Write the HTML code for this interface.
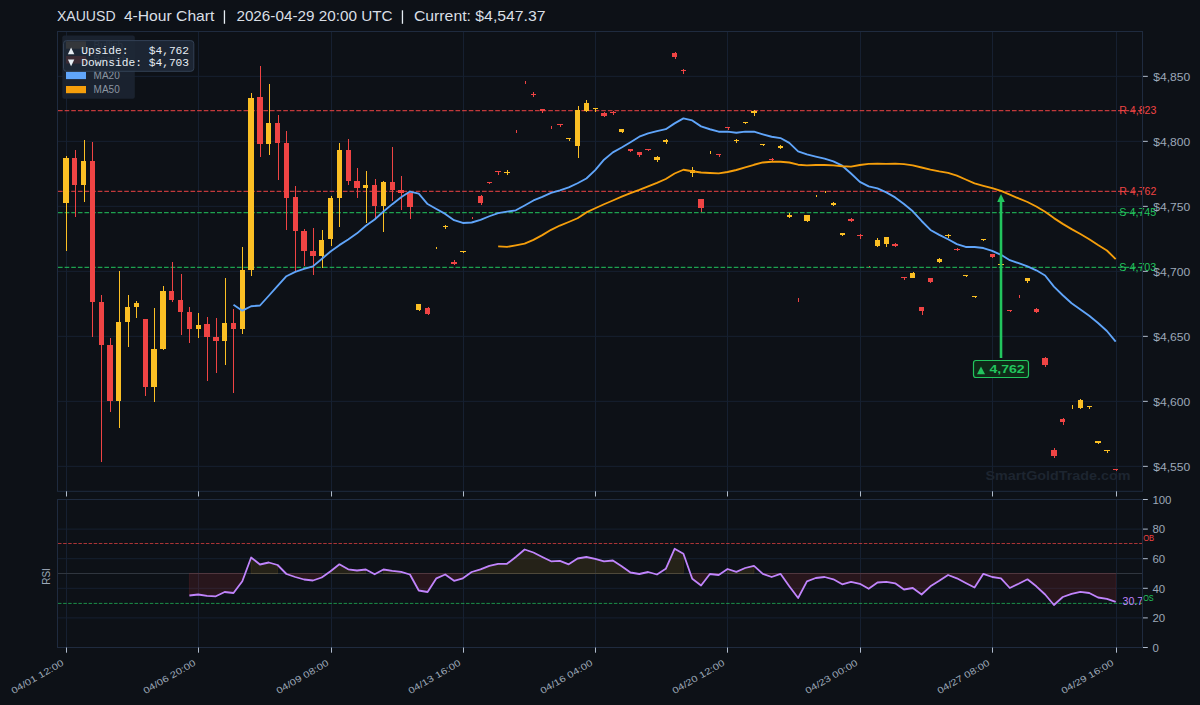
<!DOCTYPE html>
<html><head><meta charset="utf-8"><title>XAUUSD 4-Hour Chart</title>
<style>html,body{margin:0;padding:0;background:#0d1117;overflow:hidden;width:1200px;height:705px}svg{display:block}</style>
</head><body>
<svg width="1200" height="705" viewBox="0 0 1200 705" shape-rendering="geometricPrecision"><rect x="0" y="0" width="1200" height="705" fill="#0d1117"/>
<line x1="66.50" y1="31.5" x2="66.50" y2="491.3" stroke="#162031" stroke-width="1"/>
<line x1="198.50" y1="31.5" x2="198.50" y2="491.3" stroke="#162031" stroke-width="1"/>
<line x1="331.50" y1="31.5" x2="331.50" y2="491.3" stroke="#162031" stroke-width="1"/>
<line x1="463.50" y1="31.5" x2="463.50" y2="491.3" stroke="#162031" stroke-width="1"/>
<line x1="595.50" y1="31.5" x2="595.50" y2="491.3" stroke="#162031" stroke-width="1"/>
<line x1="727.50" y1="31.5" x2="727.50" y2="491.3" stroke="#162031" stroke-width="1"/>
<line x1="860.50" y1="31.5" x2="860.50" y2="491.3" stroke="#162031" stroke-width="1"/>
<line x1="992.50" y1="31.5" x2="992.50" y2="491.3" stroke="#162031" stroke-width="1"/>
<line x1="1116.50" y1="31.5" x2="1116.50" y2="491.3" stroke="#162031" stroke-width="1"/>
<line x1="57.5" y1="466.35" x2="1142.5" y2="466.35" stroke="#162031" stroke-width="1"/>
<line x1="57.5" y1="401.35" x2="1142.5" y2="401.35" stroke="#162031" stroke-width="1"/>
<line x1="57.5" y1="336.35" x2="1142.5" y2="336.35" stroke="#162031" stroke-width="1"/>
<line x1="57.5" y1="271.35" x2="1142.5" y2="271.35" stroke="#162031" stroke-width="1"/>
<line x1="57.5" y1="206.35" x2="1142.5" y2="206.35" stroke="#162031" stroke-width="1"/>
<line x1="57.5" y1="141.35" x2="1142.5" y2="141.35" stroke="#162031" stroke-width="1"/>
<line x1="57.5" y1="76.35" x2="1142.5" y2="76.35" stroke="#162031" stroke-width="1"/>
<line x1="58" y1="110.50" x2="1142.5" y2="110.50" stroke="#ef4444" stroke-width="1.25" stroke-dasharray="4.625 2.0" opacity="0.8"/>
<line x1="58" y1="191.40" x2="1142.5" y2="191.40" stroke="#ef4444" stroke-width="1.25" stroke-dasharray="4.625 2.0" opacity="0.8"/>
<line x1="58" y1="212.50" x2="1142.5" y2="212.50" stroke="#22c55e" stroke-width="1.25" stroke-dasharray="4.625 2.0" opacity="0.8"/>
<line x1="58" y1="267.40" x2="1142.5" y2="267.40" stroke="#22c55e" stroke-width="1.25" stroke-dasharray="4.625 2.0" opacity="0.8"/>
<text x="1058" y="480" text-anchor="middle" font-family="Liberation Sans, sans-serif" font-weight="bold" font-size="13.5" fill="#1d2530" textLength="145" lengthAdjust="spacingAndGlyphs">SmartGoldTrade.com</text>
<rect x="66.0" y="156" width="1" height="95" fill="#fbbf24"/>
<rect x="63" y="158" width="6" height="45" fill="#fbbf24"/>
<rect x="75.0" y="150" width="1" height="67" fill="#ef4444"/>
<rect x="72" y="158" width="5" height="27" fill="#ef4444"/>
<rect x="84.0" y="140" width="1" height="62" fill="#fbbf24"/>
<rect x="81" y="161" width="5" height="24" fill="#fbbf24"/>
<rect x="92.0" y="142" width="1" height="195" fill="#ef4444"/>
<rect x="90" y="161" width="5" height="141" fill="#ef4444"/>
<rect x="101.0" y="295" width="1" height="167" fill="#ef4444"/>
<rect x="99" y="302" width="5" height="43" fill="#ef4444"/>
<rect x="110.0" y="338" width="1" height="74" fill="#ef4444"/>
<rect x="107" y="345" width="6" height="56" fill="#ef4444"/>
<rect x="119.0" y="271" width="1" height="157" fill="#fbbf24"/>
<rect x="116" y="322" width="5" height="79" fill="#fbbf24"/>
<rect x="128.0" y="295" width="1" height="52" fill="#fbbf24"/>
<rect x="125" y="307" width="5" height="15" fill="#fbbf24"/>
<rect x="136.0" y="301" width="1" height="17" fill="#fbbf24"/>
<rect x="134" y="303" width="5" height="4" fill="#fbbf24"/>
<rect x="145.0" y="319" width="1" height="77" fill="#ef4444"/>
<rect x="143" y="319" width="5" height="68" fill="#ef4444"/>
<rect x="154.0" y="308" width="1" height="94" fill="#fbbf24"/>
<rect x="151" y="349" width="6" height="38" fill="#fbbf24"/>
<rect x="163.0" y="286" width="1" height="64" fill="#fbbf24"/>
<rect x="160" y="291" width="6" height="58" fill="#fbbf24"/>
<rect x="172.0" y="262" width="1" height="40" fill="#ef4444"/>
<rect x="169" y="291" width="5" height="9" fill="#ef4444"/>
<rect x="181.0" y="274" width="1" height="61" fill="#ef4444"/>
<rect x="178" y="300" width="5" height="12" fill="#ef4444"/>
<rect x="189.0" y="307" width="1" height="36" fill="#ef4444"/>
<rect x="187" y="312" width="5" height="17" fill="#ef4444"/>
<rect x="198.0" y="313" width="1" height="25" fill="#fbbf24"/>
<rect x="196" y="325" width="5" height="4" fill="#fbbf24"/>
<rect x="207.0" y="317" width="1" height="64" fill="#ef4444"/>
<rect x="204" y="324" width="6" height="13" fill="#ef4444"/>
<rect x="216.0" y="318" width="1" height="55" fill="#ef4444"/>
<rect x="213" y="337" width="6" height="4" fill="#ef4444"/>
<rect x="225.0" y="278" width="1" height="87" fill="#fbbf24"/>
<rect x="222" y="323" width="5" height="18" fill="#fbbf24"/>
<rect x="233.0" y="309" width="1" height="84" fill="#ef4444"/>
<rect x="231" y="323" width="5" height="6" fill="#ef4444"/>
<rect x="242.0" y="247" width="1" height="87" fill="#fbbf24"/>
<rect x="240" y="270" width="5" height="59" fill="#fbbf24"/>
<rect x="251.0" y="93" width="1" height="183" fill="#fbbf24"/>
<rect x="248" y="98" width="6" height="172" fill="#fbbf24"/>
<rect x="260.0" y="66" width="1" height="91" fill="#ef4444"/>
<rect x="257" y="97" width="6" height="47" fill="#ef4444"/>
<rect x="269.0" y="84" width="1" height="71" fill="#fbbf24"/>
<rect x="266" y="123" width="5" height="21" fill="#fbbf24"/>
<rect x="278.0" y="115" width="1" height="65" fill="#ef4444"/>
<rect x="275" y="123" width="5" height="20" fill="#ef4444"/>
<rect x="286.0" y="131" width="1" height="99" fill="#ef4444"/>
<rect x="284" y="143" width="5" height="55" fill="#ef4444"/>
<rect x="295.0" y="186" width="1" height="85" fill="#ef4444"/>
<rect x="293" y="197" width="5" height="34" fill="#ef4444"/>
<rect x="304.0" y="229" width="1" height="37" fill="#ef4444"/>
<rect x="301" y="231" width="6" height="20" fill="#ef4444"/>
<rect x="313.0" y="228" width="1" height="47" fill="#ef4444"/>
<rect x="310" y="251" width="6" height="5" fill="#ef4444"/>
<rect x="322.0" y="230" width="1" height="38" fill="#fbbf24"/>
<rect x="319" y="240" width="5" height="16" fill="#fbbf24"/>
<rect x="331.0" y="196" width="1" height="50" fill="#fbbf24"/>
<rect x="328" y="198" width="5" height="41" fill="#fbbf24"/>
<rect x="339.0" y="143" width="1" height="84" fill="#fbbf24"/>
<rect x="337" y="150" width="5" height="48" fill="#fbbf24"/>
<rect x="348.0" y="139" width="1" height="46" fill="#ef4444"/>
<rect x="346" y="150" width="5" height="31" fill="#ef4444"/>
<rect x="357.0" y="168" width="1" height="30" fill="#ef4444"/>
<rect x="354" y="181" width="6" height="7" fill="#ef4444"/>
<rect x="366.0" y="171" width="1" height="52" fill="#fbbf24"/>
<rect x="363" y="185" width="5" height="3" fill="#fbbf24"/>
<rect x="375.0" y="179" width="1" height="39" fill="#ef4444"/>
<rect x="372" y="185" width="5" height="21" fill="#ef4444"/>
<rect x="383.0" y="181" width="1" height="51" fill="#fbbf24"/>
<rect x="381" y="182" width="5" height="24" fill="#fbbf24"/>
<rect x="392.0" y="147" width="1" height="54" fill="#ef4444"/>
<rect x="390" y="182" width="5" height="8" fill="#ef4444"/>
<rect x="401.0" y="176" width="1" height="34" fill="#ef4444"/>
<rect x="398" y="190" width="6" height="3" fill="#ef4444"/>
<rect x="410.0" y="193" width="1" height="26" fill="#ef4444"/>
<rect x="407" y="193" width="6" height="14" fill="#ef4444"/>
<rect x="419.0" y="304" width="1" height="7" fill="#fbbf24"/>
<rect x="416" y="304" width="5" height="6" fill="#fbbf24"/>
<rect x="428.0" y="307" width="1" height="8" fill="#ef4444"/>
<rect x="425" y="308" width="5" height="6" fill="#ef4444"/>
<rect x="436.0" y="247" width="1" height="2" fill="#fbbf24"/>
<rect x="445.0" y="225" width="1" height="4" fill="#fbbf24"/>
<rect x="443" y="226" width="5" height="1" fill="#fbbf24"/>
<rect x="454.0" y="260" width="1" height="5" fill="#ef4444"/>
<rect x="451" y="262" width="6" height="2" fill="#ef4444"/>
<rect x="463.0" y="251" width="1" height="2" fill="#fbbf24"/>
<rect x="460" y="251" width="6" height="1" fill="#fbbf24"/>
<rect x="472.0" y="217" width="1" height="2" fill="#ef4444"/>
<rect x="481.0" y="195" width="1" height="10" fill="#ef4444"/>
<rect x="478" y="196" width="5" height="7" fill="#ef4444"/>
<rect x="489.0" y="182" width="1" height="2" fill="#ef4444"/>
<rect x="487" y="182" width="5" height="1" fill="#ef4444"/>
<rect x="498.0" y="171" width="1" height="4" fill="#ef4444"/>
<rect x="495" y="171" width="6" height="1" fill="#ef4444"/>
<rect x="507.0" y="170" width="1" height="5" fill="#fbbf24"/>
<rect x="504" y="172" width="6" height="1" fill="#fbbf24"/>
<rect x="516.0" y="130" width="1" height="3" fill="#ef4444"/>
<rect x="525.0" y="81" width="1" height="3" fill="#ef4444"/>
<rect x="533.0" y="92" width="1" height="5" fill="#ef4444"/>
<rect x="531" y="94" width="5" height="1" fill="#ef4444"/>
<rect x="542.0" y="109" width="1" height="4" fill="#ef4444"/>
<rect x="540" y="109" width="5" height="2" fill="#ef4444"/>
<rect x="551.0" y="126" width="1" height="3" fill="#ef4444"/>
<rect x="560.0" y="124" width="1" height="3" fill="#ef4444"/>
<rect x="557" y="124" width="6" height="1" fill="#ef4444"/>
<rect x="569.0" y="138" width="1" height="3" fill="#fbbf24"/>
<rect x="566" y="138" width="5" height="1" fill="#fbbf24"/>
<rect x="578.0" y="106" width="1" height="52" fill="#fbbf24"/>
<rect x="575" y="110" width="5" height="36" fill="#fbbf24"/>
<rect x="586.0" y="100" width="1" height="12" fill="#fbbf24"/>
<rect x="584" y="103" width="5" height="8" fill="#fbbf24"/>
<rect x="595.0" y="108" width="1" height="4" fill="#fbbf24"/>
<rect x="593" y="108" width="5" height="1" fill="#fbbf24"/>
<rect x="604.0" y="112" width="1" height="5" fill="#ef4444"/>
<rect x="601" y="113" width="6" height="3" fill="#ef4444"/>
<rect x="613.0" y="111" width="1" height="4" fill="#ef4444"/>
<rect x="610" y="112" width="6" height="1" fill="#ef4444"/>
<rect x="622.0" y="129" width="1" height="4" fill="#fbbf24"/>
<rect x="619" y="129" width="5" height="3" fill="#fbbf24"/>
<rect x="630.0" y="149" width="1" height="3" fill="#ef4444"/>
<rect x="628" y="149" width="5" height="2" fill="#ef4444"/>
<rect x="639.0" y="152" width="1" height="5" fill="#ef4444"/>
<rect x="637" y="152" width="5" height="3" fill="#ef4444"/>
<rect x="648.0" y="149" width="1" height="2" fill="#ef4444"/>
<rect x="645" y="149" width="6" height="1" fill="#ef4444"/>
<rect x="657.0" y="156" width="1" height="6" fill="#fbbf24"/>
<rect x="654" y="157" width="6" height="3" fill="#fbbf24"/>
<rect x="666.0" y="139" width="1" height="5" fill="#fbbf24"/>
<rect x="663" y="140" width="5" height="2" fill="#fbbf24"/>
<rect x="675.0" y="52" width="1" height="7" fill="#ef4444"/>
<rect x="672" y="53" width="5" height="4" fill="#ef4444"/>
<rect x="683.0" y="69" width="1" height="5" fill="#ef4444"/>
<rect x="681" y="70" width="5" height="1" fill="#ef4444"/>
<rect x="692.0" y="167" width="1" height="10" fill="#fbbf24"/>
<rect x="690" y="170" width="5" height="3" fill="#fbbf24"/>
<rect x="701.0" y="199" width="1" height="13" fill="#ef4444"/>
<rect x="698" y="199" width="6" height="9" fill="#ef4444"/>
<rect x="710.0" y="151" width="1" height="3" fill="#fbbf24"/>
<rect x="719.0" y="154" width="1" height="3" fill="#ef4444"/>
<rect x="716" y="154" width="5" height="1" fill="#ef4444"/>
<rect x="728.0" y="127" width="1" height="3" fill="#ef4444"/>
<rect x="725" y="127" width="5" height="1" fill="#ef4444"/>
<rect x="736.0" y="139" width="1" height="4" fill="#fbbf24"/>
<rect x="734" y="140" width="5" height="1" fill="#fbbf24"/>
<rect x="745.0" y="122" width="1" height="2" fill="#fbbf24"/>
<rect x="743" y="122" width="5" height="1" fill="#fbbf24"/>
<rect x="754.0" y="110" width="1" height="6" fill="#fbbf24"/>
<rect x="751" y="111" width="6" height="2" fill="#fbbf24"/>
<rect x="763.0" y="144" width="1" height="2" fill="#fbbf24"/>
<rect x="760" y="144" width="5" height="1" fill="#fbbf24"/>
<rect x="772.0" y="158" width="1" height="3" fill="#ef4444"/>
<rect x="769" y="159" width="5" height="1" fill="#ef4444"/>
<rect x="780.0" y="145" width="1" height="4" fill="#fbbf24"/>
<rect x="778" y="146" width="5" height="2" fill="#fbbf24"/>
<rect x="789.0" y="213" width="1" height="5" fill="#fbbf24"/>
<rect x="787" y="215" width="5" height="2" fill="#fbbf24"/>
<rect x="798.0" y="298" width="1" height="4" fill="#ef4444"/>
<rect x="807.0" y="215" width="1" height="7" fill="#fbbf24"/>
<rect x="804" y="215" width="6" height="6" fill="#fbbf24"/>
<rect x="816.0" y="195" width="1" height="2" fill="#fbbf24"/>
<rect x="825.0" y="191" width="1" height="2" fill="#fbbf24"/>
<rect x="833.0" y="202" width="1" height="4" fill="#fbbf24"/>
<rect x="831" y="203" width="5" height="2" fill="#fbbf24"/>
<rect x="842.0" y="233" width="1" height="3" fill="#fbbf24"/>
<rect x="840" y="233" width="5" height="2" fill="#fbbf24"/>
<rect x="851.0" y="218" width="1" height="4" fill="#ef4444"/>
<rect x="848" y="219" width="6" height="2" fill="#ef4444"/>
<rect x="860.0" y="234" width="1" height="5" fill="#ef4444"/>
<rect x="857" y="235" width="6" height="1" fill="#ef4444"/>
<rect x="869.0" y="266" width="1" height="1" fill="#ef4444"/>
<rect x="877.0" y="238" width="1" height="9" fill="#fbbf24"/>
<rect x="875" y="240" width="5" height="6" fill="#fbbf24"/>
<rect x="886.0" y="237" width="1" height="10" fill="#fbbf24"/>
<rect x="884" y="237" width="5" height="7" fill="#fbbf24"/>
<rect x="895.0" y="243" width="1" height="4" fill="#ef4444"/>
<rect x="892" y="244" width="6" height="2" fill="#ef4444"/>
<rect x="904.0" y="277" width="1" height="3" fill="#ef4444"/>
<rect x="901" y="277" width="6" height="1" fill="#ef4444"/>
<rect x="913.0" y="272" width="1" height="6" fill="#fbbf24"/>
<rect x="910" y="273" width="5" height="5" fill="#fbbf24"/>
<rect x="922.0" y="307" width="1" height="8" fill="#ef4444"/>
<rect x="919" y="307" width="5" height="4" fill="#ef4444"/>
<rect x="930.0" y="278" width="1" height="5" fill="#ef4444"/>
<rect x="928" y="278" width="5" height="4" fill="#ef4444"/>
<rect x="939.0" y="258" width="1" height="5" fill="#fbbf24"/>
<rect x="937" y="259" width="5" height="3" fill="#fbbf24"/>
<rect x="948.0" y="234" width="1" height="4" fill="#fbbf24"/>
<rect x="945" y="235" width="6" height="1" fill="#fbbf24"/>
<rect x="957.0" y="248" width="1" height="3" fill="#ef4444"/>
<rect x="954" y="249" width="6" height="1" fill="#ef4444"/>
<rect x="966.0" y="275" width="1" height="2" fill="#fbbf24"/>
<rect x="963" y="275" width="5" height="1" fill="#fbbf24"/>
<rect x="975.0" y="296" width="1" height="2" fill="#fbbf24"/>
<rect x="972" y="296" width="5" height="1" fill="#fbbf24"/>
<rect x="983.0" y="239" width="1" height="2" fill="#fbbf24"/>
<rect x="981" y="239" width="5" height="1" fill="#fbbf24"/>
<rect x="992.0" y="254" width="1" height="4" fill="#ef4444"/>
<rect x="990" y="254" width="5" height="3" fill="#ef4444"/>
<rect x="1001.0" y="264" width="1" height="2" fill="#fbbf24"/>
<rect x="998" y="264" width="6" height="1" fill="#fbbf24"/>
<rect x="1010.0" y="310" width="1" height="2" fill="#ef4444"/>
<rect x="1007" y="310" width="5" height="1" fill="#ef4444"/>
<rect x="1019.0" y="295" width="1" height="3" fill="#ef4444"/>
<rect x="1027.0" y="278" width="1" height="5" fill="#fbbf24"/>
<rect x="1025" y="278" width="5" height="3" fill="#fbbf24"/>
<rect x="1036.0" y="308" width="1" height="5" fill="#ef4444"/>
<rect x="1034" y="309" width="5" height="3" fill="#ef4444"/>
<rect x="1045.0" y="357" width="1" height="10" fill="#ef4444"/>
<rect x="1042" y="358" width="6" height="7" fill="#ef4444"/>
<rect x="1054.0" y="448" width="1" height="10" fill="#ef4444"/>
<rect x="1051" y="450" width="6" height="6" fill="#ef4444"/>
<rect x="1063.0" y="418" width="1" height="7" fill="#ef4444"/>
<rect x="1060" y="419" width="5" height="3" fill="#ef4444"/>
<rect x="1072.0" y="405" width="1" height="4" fill="#fbbf24"/>
<rect x="1080.0" y="399" width="1" height="10" fill="#fbbf24"/>
<rect x="1078" y="400" width="5" height="8" fill="#fbbf24"/>
<rect x="1089.0" y="406" width="1" height="3" fill="#fbbf24"/>
<rect x="1087" y="406" width="5" height="1" fill="#fbbf24"/>
<rect x="1098.0" y="441" width="1" height="3" fill="#fbbf24"/>
<rect x="1095" y="441" width="6" height="2" fill="#fbbf24"/>
<rect x="1107.0" y="450" width="1" height="3" fill="#fbbf24"/>
<rect x="1104" y="450" width="6" height="1" fill="#fbbf24"/>
<rect x="1116.0" y="469" width="1" height="2" fill="#ef4444"/>
<rect x="1113" y="469" width="5" height="1" fill="#ef4444"/>
<polyline points="233.50,304.70 242.32,310.67 251.14,306.29 259.96,305.50 268.79,295.75 277.61,285.95 286.43,276.24 295.25,271.91 304.07,268.84 312.90,266.41 321.72,258.98 330.54,251.45 339.36,245.15 348.18,239.45 357.01,233.35 365.83,225.76 374.65,219.44 383.47,211.56 392.29,204.15 401.12,197.16 409.94,191.54 418.76,193.55 427.58,204.05 436.40,209.03 445.23,213.88 454.05,220.19 462.87,222.96 471.69,222.50 480.51,219.79 489.34,216.25 498.16,213.05 506.98,211.66 515.80,210.30 524.62,205.50 533.45,200.44 542.27,196.80 551.09,192.91 559.91,190.33 568.73,187.30 577.56,183.27 586.38,178.53 595.20,170.07 604.02,159.71 612.84,152.38 621.67,147.52 630.49,142.19 639.31,136.66 648.13,133.36 656.95,131.14 665.78,129.21 674.60,123.37 683.42,118.33 692.24,120.46 701.06,126.39 709.89,129.25 718.71,131.70 727.53,131.70 736.35,132.79 745.17,131.70 754.00,131.70 762.82,134.29 771.64,136.74 780.46,138.05 789.28,142.88 798.11,151.34 806.93,154.47 815.75,156.57 824.57,158.70 833.39,161.35 842.22,165.69 851.04,173.53 859.86,181.87 868.68,186.44 877.50,188.30 886.33,192.33 895.15,197.41 903.97,204.03 912.79,211.33 921.61,220.98 930.44,229.94 939.26,234.88 948.08,239.24 956.90,244.07 965.72,246.97 974.55,247.04 983.37,248.02 992.19,250.88 1001.01,254.83 1009.83,260.20 1018.66,263.12 1027.48,266.39 1036.30,270.32 1045.12,275.46 1053.94,286.67 1062.77,295.28 1071.59,303.20 1080.41,309.43 1089.23,315.83 1098.05,323.00 1106.88,331.01 1115.70,341.58" fill="none" stroke="#60a5fa" stroke-width="1.85" stroke-linejoin="round"/>
<polyline points="498.16,246.35 506.98,246.95 515.80,245.30 524.62,243.71 533.45,239.81 542.27,235.12 551.09,229.83 559.91,225.54 568.73,221.99 577.56,218.26 586.38,212.42 595.20,208.28 604.02,204.25 612.84,200.49 621.67,196.66 630.49,193.12 639.31,189.95 648.13,186.37 656.95,182.89 665.78,179.01 674.60,173.52 683.42,169.77 692.24,171.26 701.06,172.51 709.89,172.99 718.71,173.30 727.53,171.99 736.35,169.99 745.17,167.45 754.00,164.76 762.82,162.47 771.64,161.71 780.46,161.74 789.28,162.52 798.11,164.71 806.93,165.30 815.75,165.02 824.57,165.00 833.39,165.31 842.22,166.21 851.04,166.66 859.86,165.03 868.68,163.87 877.50,163.70 886.33,163.80 895.15,163.70 903.97,164.19 912.79,165.37 921.61,167.48 930.44,169.59 939.26,171.31 948.08,172.82 956.90,175.59 965.72,179.52 974.55,183.40 983.37,185.82 992.19,188.22 1001.01,190.89 1009.83,194.63 1018.66,198.44 1027.48,201.99 1036.30,206.50 1045.12,211.79 1053.94,218.12 1062.77,223.85 1071.59,229.13 1080.41,234.04 1089.23,239.22 1098.05,245.04 1106.88,250.47 1115.70,259.10" fill="none" stroke="#f59e0b" stroke-width="1.85" stroke-linejoin="round"/>
<line x1="1001.01" y1="358" x2="1001.01" y2="200" stroke="#22c55e" stroke-width="2.6"/>
<polygon points="997.21,202 1004.81,202 1001.01,194" fill="#22c55e"/>
<rect x="973.5" y="360.5" width="55" height="17" rx="2.5" fill="#0f2a18" stroke="#22c55e" stroke-width="1.2"/>
<polygon points="977,374.2 985,374.2 981,366.5" fill="#22c55e"/>
<text x="989.5" y="373.4" font-family="Liberation Sans, sans-serif" font-weight="bold" font-size="11.5" fill="#22c55e" textLength="35.2" lengthAdjust="spacingAndGlyphs">4,762</text>
<text x="1119.3" y="114.30" font-family="Liberation Sans, sans-serif" font-size="10.3" fill="#ef4444" textLength="37" lengthAdjust="spacingAndGlyphs">R 4,823</text>
<text x="1119.3" y="195.20" font-family="Liberation Sans, sans-serif" font-size="10.3" fill="#ef4444" textLength="37" lengthAdjust="spacingAndGlyphs">R 4,762</text>
<text x="1119.3" y="216.30" font-family="Liberation Sans, sans-serif" font-size="10.3" fill="#22c55e" textLength="37" lengthAdjust="spacingAndGlyphs">S 4,745</text>
<text x="1119.3" y="271.20" font-family="Liberation Sans, sans-serif" font-size="10.3" fill="#22c55e" textLength="37" lengthAdjust="spacingAndGlyphs">S 4,703</text>
<rect x="57.5" y="31.5" width="1085.0" height="459.8" fill="none" stroke="#1f2b3f" stroke-width="1"/>
<line x1="1143.0" y1="466.35" x2="1147.8" y2="466.35" stroke="#b0bccd" stroke-width="1"/>
<text x="1153.3" y="470.95" font-family="Liberation Sans, sans-serif" font-size="10.5" fill="#9ca8b8" textLength="37" lengthAdjust="spacingAndGlyphs">$4,550</text>
<line x1="1143.0" y1="401.35" x2="1147.8" y2="401.35" stroke="#b0bccd" stroke-width="1"/>
<text x="1153.3" y="405.95" font-family="Liberation Sans, sans-serif" font-size="10.5" fill="#9ca8b8" textLength="37" lengthAdjust="spacingAndGlyphs">$4,600</text>
<line x1="1143.0" y1="336.35" x2="1147.8" y2="336.35" stroke="#b0bccd" stroke-width="1"/>
<text x="1153.3" y="340.95" font-family="Liberation Sans, sans-serif" font-size="10.5" fill="#9ca8b8" textLength="37" lengthAdjust="spacingAndGlyphs">$4,650</text>
<line x1="1143.0" y1="271.35" x2="1147.8" y2="271.35" stroke="#b0bccd" stroke-width="1"/>
<text x="1153.3" y="275.95" font-family="Liberation Sans, sans-serif" font-size="10.5" fill="#9ca8b8" textLength="37" lengthAdjust="spacingAndGlyphs">$4,700</text>
<line x1="1143.0" y1="206.35" x2="1147.8" y2="206.35" stroke="#b0bccd" stroke-width="1"/>
<text x="1153.3" y="210.95" font-family="Liberation Sans, sans-serif" font-size="10.5" fill="#9ca8b8" textLength="37" lengthAdjust="spacingAndGlyphs">$4,750</text>
<line x1="1143.0" y1="141.35" x2="1147.8" y2="141.35" stroke="#b0bccd" stroke-width="1"/>
<text x="1153.3" y="145.95" font-family="Liberation Sans, sans-serif" font-size="10.5" fill="#9ca8b8" textLength="37" lengthAdjust="spacingAndGlyphs">$4,800</text>
<line x1="1143.0" y1="76.35" x2="1147.8" y2="76.35" stroke="#b0bccd" stroke-width="1"/>
<text x="1153.3" y="80.95" font-family="Liberation Sans, sans-serif" font-size="10.5" fill="#9ca8b8" textLength="37" lengthAdjust="spacingAndGlyphs">$4,850</text>
<line x1="66.50" y1="491.3" x2="66.50" y2="496.5" stroke="#b0bccd" stroke-width="1"/>
<line x1="198.50" y1="491.3" x2="198.50" y2="496.5" stroke="#b0bccd" stroke-width="1"/>
<line x1="331.50" y1="491.3" x2="331.50" y2="496.5" stroke="#b0bccd" stroke-width="1"/>
<line x1="463.50" y1="491.3" x2="463.50" y2="496.5" stroke="#b0bccd" stroke-width="1"/>
<line x1="595.50" y1="491.3" x2="595.50" y2="496.5" stroke="#b0bccd" stroke-width="1"/>
<line x1="727.50" y1="491.3" x2="727.50" y2="496.5" stroke="#b0bccd" stroke-width="1"/>
<line x1="860.50" y1="491.3" x2="860.50" y2="496.5" stroke="#b0bccd" stroke-width="1"/>
<line x1="992.50" y1="491.3" x2="992.50" y2="496.5" stroke="#b0bccd" stroke-width="1"/>
<line x1="1116.50" y1="491.3" x2="1116.50" y2="496.5" stroke="#b0bccd" stroke-width="1"/>
<rect x="62.3" y="35.6" width="72.5" height="63.2" rx="2" fill="#1b2430" opacity="0.95"/>
<rect x="66" y="41.5" width="20" height="7.2" fill="#3a3d40"/>
<text x="93.6" y="48.60" font-family="Liberation Sans, sans-serif" font-size="10" fill="#8b95a1">Bullish</text>
<rect x="66" y="56" width="20" height="7.2" fill="#3f2a2e"/>
<text x="93.6" y="63.10" font-family="Liberation Sans, sans-serif" font-size="10" fill="#8b95a1">Bearish</text>
<rect x="66" y="71.9" width="20" height="7.2" fill="#60a5fa"/>
<text x="93.6" y="79.00" font-family="Liberation Sans, sans-serif" font-size="10" fill="#8b95a1">MA20</text>
<rect x="66" y="86" width="20" height="7.2" fill="#f59e0b"/>
<text x="93.6" y="93.10" font-family="Liberation Sans, sans-serif" font-size="10" fill="#8b95a1">MA50</text>
<rect x="63.5" y="40.6" width="130.3" height="30.7" rx="3" fill="#1e2836" fill-opacity="0.9" stroke="#334155" stroke-width="1"/>
<rect x="66" y="41.3" width="20" height="7.4" fill="#34373b"/>
<rect x="66" y="56" width="20" height="7.6" fill="#3a2b34"/>
<polygon points="67.9,54.3 74.3,54.3 71.1,47.6" fill="#e6edf3"/>
<polygon points="67.9,59.6 74.3,59.6 71.1,66.2" fill="#e6edf3"/>
<text x="81.3" y="54.2" font-family="Liberation Mono, monospace" font-size="11" fill="#e6edf3" textLength="107.8" lengthAdjust="spacingAndGlyphs" xml:space="preserve" style="white-space:pre">Upside:   $4,762</text>
<text x="81.3" y="66.4" font-family="Liberation Mono, monospace" font-size="11" fill="#e6edf3" textLength="107.8" lengthAdjust="spacingAndGlyphs" xml:space="preserve" style="white-space:pre">Downside: $4,703</text>
<line x1="66.50" y1="499.5" x2="66.50" y2="647.5" stroke="#162031" stroke-width="1"/>
<line x1="198.50" y1="499.5" x2="198.50" y2="647.5" stroke="#162031" stroke-width="1"/>
<line x1="331.50" y1="499.5" x2="331.50" y2="647.5" stroke="#162031" stroke-width="1"/>
<line x1="463.50" y1="499.5" x2="463.50" y2="647.5" stroke="#162031" stroke-width="1"/>
<line x1="595.50" y1="499.5" x2="595.50" y2="647.5" stroke="#162031" stroke-width="1"/>
<line x1="727.50" y1="499.5" x2="727.50" y2="647.5" stroke="#162031" stroke-width="1"/>
<line x1="860.50" y1="499.5" x2="860.50" y2="647.5" stroke="#162031" stroke-width="1"/>
<line x1="992.50" y1="499.5" x2="992.50" y2="647.5" stroke="#162031" stroke-width="1"/>
<line x1="1116.50" y1="499.5" x2="1116.50" y2="647.5" stroke="#162031" stroke-width="1"/>
<line x1="57.5" y1="617.90" x2="1142.5" y2="617.90" stroke="#162031" stroke-width="1"/>
<line x1="57.5" y1="588.30" x2="1142.5" y2="588.30" stroke="#162031" stroke-width="1"/>
<line x1="57.5" y1="558.70" x2="1142.5" y2="558.70" stroke="#162031" stroke-width="1"/>
<line x1="57.5" y1="529.10" x2="1142.5" y2="529.10" stroke="#162031" stroke-width="1"/>
<line x1="57.5" y1="573.50" x2="1142.5" y2="573.50" stroke="#30363f" stroke-width="1"/>
<polygon points="251.14,557.50 259.96,564.50 268.79,562.50 277.61,565.00 277.61,573.50 251.14,573.50" fill="#fbbf24" fill-opacity="0.1" stroke="#fbbf24" stroke-opacity="0.1" stroke-width="1"/>
<polygon points="330.54,571.30 339.36,564.30 348.18,569.30 357.01,570.50 365.83,569.50 365.83,573.50 330.54,573.50" fill="#fbbf24" fill-opacity="0.1" stroke="#fbbf24" stroke-opacity="0.1" stroke-width="1"/>
<polygon points="383.47,569.50 392.29,570.80 401.12,571.80 401.12,573.50 383.47,573.50" fill="#fbbf24" fill-opacity="0.1" stroke="#fbbf24" stroke-opacity="0.1" stroke-width="1"/>
<polygon points="471.69,572.00 480.51,569.30 489.34,565.80 498.16,563.80 506.98,563.80 515.80,557.00 524.62,549.50 533.45,552.50 542.27,557.00 551.09,561.30 559.91,560.80 568.73,564.30 577.56,558.50 586.38,557.00 595.20,558.80 604.02,561.30 612.84,560.50 621.67,566.30 630.49,572.50 630.49,573.50 471.69,573.50" fill="#fbbf24" fill-opacity="0.1" stroke="#fbbf24" stroke-opacity="0.1" stroke-width="1"/>
<polygon points="665.78,568.80 674.60,548.80 683.42,553.80 683.42,573.50 665.78,573.50" fill="#fbbf24" fill-opacity="0.1" stroke="#fbbf24" stroke-opacity="0.1" stroke-width="1"/>
<polygon points="727.53,569.00 736.35,571.80 745.17,568.00 754.00,565.80 754.00,573.50 727.53,573.50" fill="#fbbf24" fill-opacity="0.1" stroke="#fbbf24" stroke-opacity="0.1" stroke-width="1"/>
<polygon points="189.39,595.50 198.21,594.50 207.03,595.80 215.85,596.30 224.68,592.00 233.50,593.00 242.32,581.30 242.32,573.50 189.39,573.50" fill="#ef4444" fill-opacity="0.12" stroke="#ef4444" stroke-opacity="0.12" stroke-width="1"/>
<polygon points="286.43,574.00 295.25,577.00 304.07,579.50 312.90,580.50 321.72,577.50 321.72,573.50 286.43,573.50" fill="#ef4444" fill-opacity="0.12" stroke="#ef4444" stroke-opacity="0.12" stroke-width="1"/>
<polygon points="409.94,574.50 418.76,590.50 427.58,592.00 436.40,578.30 445.23,574.50 454.05,580.80 462.87,578.30 462.87,573.50 409.94,573.50" fill="#ef4444" fill-opacity="0.12" stroke="#ef4444" stroke-opacity="0.12" stroke-width="1"/>
<polygon points="692.24,578.80 701.06,585.50 709.89,574.00 718.71,575.00 718.71,573.50 692.24,573.50" fill="#ef4444" fill-opacity="0.12" stroke="#ef4444" stroke-opacity="0.12" stroke-width="1"/>
<polygon points="762.82,573.80 771.64,577.00 780.46,573.80 789.28,586.30 798.11,598.00 806.93,581.30 815.75,578.00 824.57,577.00 833.39,579.30 842.22,584.30 851.04,581.80 859.86,583.80 868.68,588.80 877.50,582.50 886.33,581.80 895.15,583.30 903.97,589.50 912.79,588.00 921.61,594.50 930.44,586.30 939.26,580.80 948.08,575.00 956.90,578.30 965.72,583.00 974.55,587.50 983.37,573.80 992.19,577.00 1001.01,578.30 1009.83,588.00 1018.66,583.80 1027.48,579.30 1036.30,586.30 1045.12,594.50 1053.94,605.00 1062.77,597.00 1071.59,593.80 1080.41,591.80 1089.23,593.00 1098.05,597.50 1106.88,598.80 1115.70,601.80 1115.70,573.50 762.82,573.50" fill="#ef4444" fill-opacity="0.12" stroke="#ef4444" stroke-opacity="0.12" stroke-width="1"/>
<line x1="58" y1="543.5" x2="1142.5" y2="543.5" stroke="#ef4444" stroke-width="1" stroke-dasharray="3.5 1.6" opacity="0.7"/>
<line x1="58" y1="603.4" x2="1142.5" y2="603.4" stroke="#22c55e" stroke-width="1" stroke-dasharray="3.5 1.6" opacity="0.7"/>
<polyline points="189.39,595.50 198.21,594.50 207.03,595.80 215.85,596.30 224.68,592.00 233.50,593.00 242.32,581.30 251.14,557.50 259.96,564.50 268.79,562.50 277.61,565.00 286.43,574.00 295.25,577.00 304.07,579.50 312.90,580.50 321.72,577.50 330.54,571.30 339.36,564.30 348.18,569.30 357.01,570.50 365.83,569.50 374.65,574.30 383.47,569.50 392.29,570.80 401.12,571.80 409.94,574.50 418.76,590.50 427.58,592.00 436.40,578.30 445.23,574.50 454.05,580.80 462.87,578.30 471.69,572.00 480.51,569.30 489.34,565.80 498.16,563.80 506.98,563.80 515.80,557.00 524.62,549.50 533.45,552.50 542.27,557.00 551.09,561.30 559.91,560.80 568.73,564.30 577.56,558.50 586.38,557.00 595.20,558.80 604.02,561.30 612.84,560.50 621.67,566.30 630.49,572.50 639.31,574.00 648.13,572.00 656.95,574.50 665.78,568.80 674.60,548.80 683.42,553.80 692.24,578.80 701.06,585.50 709.89,574.00 718.71,575.00 727.53,569.00 736.35,571.80 745.17,568.00 754.00,565.80 762.82,573.80 771.64,577.00 780.46,573.80 789.28,586.30 798.11,598.00 806.93,581.30 815.75,578.00 824.57,577.00 833.39,579.30 842.22,584.30 851.04,581.80 859.86,583.80 868.68,588.80 877.50,582.50 886.33,581.80 895.15,583.30 903.97,589.50 912.79,588.00 921.61,594.50 930.44,586.30 939.26,580.80 948.08,575.00 956.90,578.30 965.72,583.00 974.55,587.50 983.37,573.80 992.19,577.00 1001.01,578.30 1009.83,588.00 1018.66,583.80 1027.48,579.30 1036.30,586.30 1045.12,594.50 1053.94,605.00 1062.77,597.00 1071.59,593.80 1080.41,591.80 1089.23,593.00 1098.05,597.50 1106.88,598.80 1115.70,601.80" fill="none" stroke="#c084fc" stroke-width="1.8" stroke-linejoin="round"/>
<text x="1122.6" y="605" font-family="Liberation Sans, sans-serif" font-size="10.3" fill="#c084fc" textLength="20.6" lengthAdjust="spacingAndGlyphs">30.7</text>
<text x="1143.2" y="541" font-family="Liberation Sans, sans-serif" font-size="8.8" fill="#ef4444" textLength="11" lengthAdjust="spacingAndGlyphs">OB</text>
<text x="1143.2" y="601" font-family="Liberation Sans, sans-serif" font-size="8.8" fill="#22c55e" textLength="10.5" lengthAdjust="spacingAndGlyphs">OS</text>
<rect x="57.5" y="499.5" width="1085.0" height="148.0" fill="none" stroke="#1f2b3f" stroke-width="1"/>
<line x1="1143.0" y1="647.50" x2="1147.8" y2="647.50" stroke="#b0bccd" stroke-width="1"/>
<text x="1152.4" y="651.80" font-family="Liberation Sans, sans-serif" font-size="10" fill="#9ca8b8" textLength="6.36" lengthAdjust="spacingAndGlyphs">0</text>
<line x1="1143.0" y1="617.90" x2="1147.8" y2="617.90" stroke="#b0bccd" stroke-width="1"/>
<text x="1152.4" y="622.20" font-family="Liberation Sans, sans-serif" font-size="10" fill="#9ca8b8" textLength="12.72" lengthAdjust="spacingAndGlyphs">20</text>
<line x1="1143.0" y1="588.30" x2="1147.8" y2="588.30" stroke="#b0bccd" stroke-width="1"/>
<text x="1152.4" y="592.60" font-family="Liberation Sans, sans-serif" font-size="10" fill="#9ca8b8" textLength="12.72" lengthAdjust="spacingAndGlyphs">40</text>
<line x1="1143.0" y1="558.70" x2="1147.8" y2="558.70" stroke="#b0bccd" stroke-width="1"/>
<text x="1152.4" y="563.00" font-family="Liberation Sans, sans-serif" font-size="10" fill="#9ca8b8" textLength="12.72" lengthAdjust="spacingAndGlyphs">60</text>
<line x1="1143.0" y1="529.10" x2="1147.8" y2="529.10" stroke="#b0bccd" stroke-width="1"/>
<text x="1152.4" y="533.40" font-family="Liberation Sans, sans-serif" font-size="10" fill="#9ca8b8" textLength="12.72" lengthAdjust="spacingAndGlyphs">80</text>
<line x1="1143.0" y1="499.50" x2="1147.8" y2="499.50" stroke="#b0bccd" stroke-width="1"/>
<text x="1152.4" y="503.80" font-family="Liberation Sans, sans-serif" font-size="10" fill="#9ca8b8" textLength="19.08" lengthAdjust="spacingAndGlyphs">100</text>
<line x1="66.50" y1="647.5" x2="66.50" y2="652.7" stroke="#b0bccd" stroke-width="1"/>
<line x1="198.50" y1="647.5" x2="198.50" y2="652.7" stroke="#b0bccd" stroke-width="1"/>
<line x1="331.50" y1="647.5" x2="331.50" y2="652.7" stroke="#b0bccd" stroke-width="1"/>
<line x1="463.50" y1="647.5" x2="463.50" y2="652.7" stroke="#b0bccd" stroke-width="1"/>
<line x1="595.50" y1="647.5" x2="595.50" y2="652.7" stroke="#b0bccd" stroke-width="1"/>
<line x1="727.50" y1="647.5" x2="727.50" y2="652.7" stroke="#b0bccd" stroke-width="1"/>
<line x1="860.50" y1="647.5" x2="860.50" y2="652.7" stroke="#b0bccd" stroke-width="1"/>
<line x1="992.50" y1="647.5" x2="992.50" y2="652.7" stroke="#b0bccd" stroke-width="1"/>
<line x1="1116.50" y1="647.5" x2="1116.50" y2="652.7" stroke="#b0bccd" stroke-width="1"/>
<text transform="translate(61.50,659.5) rotate(-30)" text-anchor="end" font-family="Liberation Sans, sans-serif" font-size="9" fill="#9ca8b8" textLength="59" lengthAdjust="spacingAndGlyphs" dy="6">04/01 12:00</text>
<text transform="translate(193.50,659.5) rotate(-30)" text-anchor="end" font-family="Liberation Sans, sans-serif" font-size="9" fill="#9ca8b8" textLength="59" lengthAdjust="spacingAndGlyphs" dy="6">04/06 20:00</text>
<text transform="translate(326.50,659.5) rotate(-30)" text-anchor="end" font-family="Liberation Sans, sans-serif" font-size="9" fill="#9ca8b8" textLength="59" lengthAdjust="spacingAndGlyphs" dy="6">04/09 08:00</text>
<text transform="translate(458.50,659.5) rotate(-30)" text-anchor="end" font-family="Liberation Sans, sans-serif" font-size="9" fill="#9ca8b8" textLength="59" lengthAdjust="spacingAndGlyphs" dy="6">04/13 16:00</text>
<text transform="translate(590.50,659.5) rotate(-30)" text-anchor="end" font-family="Liberation Sans, sans-serif" font-size="9" fill="#9ca8b8" textLength="59" lengthAdjust="spacingAndGlyphs" dy="6">04/16 04:00</text>
<text transform="translate(722.50,659.5) rotate(-30)" text-anchor="end" font-family="Liberation Sans, sans-serif" font-size="9" fill="#9ca8b8" textLength="59" lengthAdjust="spacingAndGlyphs" dy="6">04/20 12:00</text>
<text transform="translate(855.50,659.5) rotate(-30)" text-anchor="end" font-family="Liberation Sans, sans-serif" font-size="9" fill="#9ca8b8" textLength="59" lengthAdjust="spacingAndGlyphs" dy="6">04/23 00:00</text>
<text transform="translate(987.50,659.5) rotate(-30)" text-anchor="end" font-family="Liberation Sans, sans-serif" font-size="9" fill="#9ca8b8" textLength="59" lengthAdjust="spacingAndGlyphs" dy="6">04/27 08:00</text>
<text transform="translate(1111.50,659.5) rotate(-30)" text-anchor="end" font-family="Liberation Sans, sans-serif" font-size="9" fill="#9ca8b8" textLength="59" lengthAdjust="spacingAndGlyphs" dy="6">04/29 16:00</text>
<text transform="translate(49.6,576.5) rotate(-90)" text-anchor="middle" font-family="Liberation Sans, sans-serif" font-size="10" fill="#9ca8b8">RSI</text>
<text x="56.9" y="21.3" font-family="Liberation Sans, sans-serif" font-size="13.9" fill="#d9dfe5" textLength="58.7" lengthAdjust="spacingAndGlyphs">XAUUSD</text>
<text x="123.9" y="21.3" font-family="Liberation Sans, sans-serif" font-size="13.9" fill="#d9dfe5" textLength="90.5" lengthAdjust="spacingAndGlyphs">4-Hour Chart</text>
<rect x="223.8" y="10.3" width="1.3" height="13.5" fill="#e6edf3"/>
<text x="236.4" y="21.3" font-family="Liberation Sans, sans-serif" font-size="13.9" fill="#d9dfe5" textLength="156.2" lengthAdjust="spacingAndGlyphs">2026-04-29 20:00 UTC</text>
<rect x="401.8" y="10.3" width="1.3" height="13.5" fill="#e6edf3"/>
<text x="413.9" y="21.3" font-family="Liberation Sans, sans-serif" font-size="13.9" fill="#d9dfe5" textLength="131.7" lengthAdjust="spacingAndGlyphs">Current: $4,547.37</text></svg>
</body></html>
